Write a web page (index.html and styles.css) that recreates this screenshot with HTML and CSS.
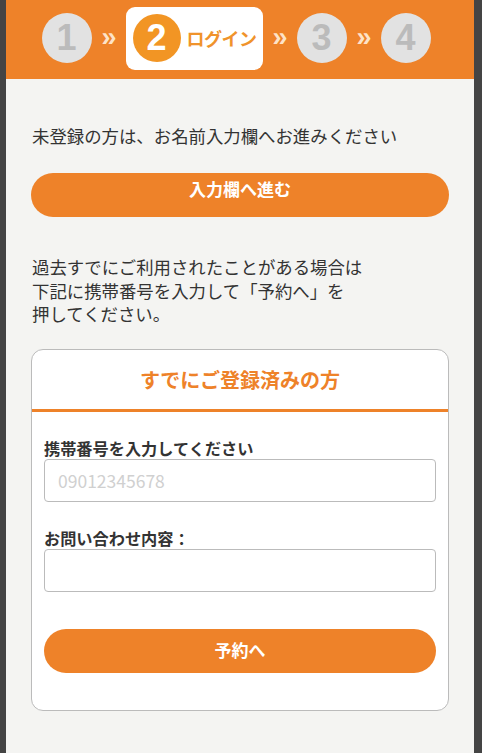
FILE: index.html
```html
<!DOCTYPE html>
<html lang="ja">
<head>
<meta charset="UTF-8">
<title>ログイン</title>
<link rel="stylesheet" href="styles.css">
</head>
<body>
<div class="page">
    <div class="steps">
        <span class="step">1</span>
        <span class="arrow">»</span>
        <div class="step-active">
            <span class="step step-now">2</span>
            <span class="step-label">ログイン</span>
        </div>
        <span class="arrow">»</span>
        <span class="step">3</span>
        <span class="arrow">»</span>
        <span class="step">4</span>
    </div>

    <div class="main">
        <p class="lead">未登録の方は、お名前入力欄へお進みください</p>
        <a class="btn" href="#">入力欄へ進む</a>

        <p class="note">過去すでにご利用されたことがある場合は<br>下記に携帯番号を入力して「予約へ」を<br>押してください。</p>

        <div class="card">
            <h2 class="card-title">すでにご登録済みの方</h2>
            <form class="card-body">
                <label class="field-label" for="tel">携帯番号を入力してください</label>
                <input class="field" type="tel" id="tel" placeholder="09012345678">

                <label class="field-label" for="memo">お問い合わせ内容：</label>
                <input class="field" type="text" id="memo">

                <button class="btn btn-submit" type="button">予約へ</button>
            </form>
        </div>
    </div>
</div>
</body>
</html>
```

FILE: styles.css
```css
body {
  margin: 0;
  background: #444444;
  font-family: "Noto Sans CJK JP", "Noto Sans", sans-serif;
  color: #333333;
}

.page {
  margin: 0 8px 0 6px;
  min-height: 753px;
  background: #f4f4f2;
}

/* step header */
.steps {
  display: flex;
  align-items: center;
  justify-content: center;
  gap: 10px;
  height: 79px;
  padding-right: 8px;
  padding-bottom: 3px;
  box-sizing: border-box;
  background: #ee8229;
}

.step {
  display: flex;
  align-items: center;
  justify-content: center;
  width: 50px;
  height: 50px;
  border-radius: 50%;
  background: #e2e2e2;
  color: #bbbbbb;
  font-family: "Liberation Sans", Arial, sans-serif;
  font-weight: bold;
  font-size: 36px;
}

.arrow {
  width: 14px;
  color: #fde3c8;
  font-family: "Liberation Sans", Arial, sans-serif;
  font-weight: bold;
  font-size: 27px;
  line-height: 1;
  margin-top: -2px;
}

.step-active {
  display: flex;
  align-items: center;
  gap: 6px;
  height: 63px;
  padding: 0 6px 0 7px;
  box-sizing: border-box;
  background: #ffffff;
  border-radius: 9px;
}

.step-now {
  width: 48px;
  height: 48px;
  background: #f29524;
  color: #ffffff;
}

.step-label {
  color: #f0932b;
  font-weight: bold;
  font-size: 18px;
  letter-spacing: -0.5px;
}

/* body */
.main {
  padding: 45px 25px 42px;
}

.lead {
  margin: 0 0 25px;
  padding-left: 1px;
  font-size: 17.4px;
  line-height: 24px;
}

.btn {
  display: block;
  width: 100%;
  height: 44px;
  padding: 0 0 12px;
  box-sizing: border-box;
  border: none;
  border-radius: 22px;
  background: #ee8229;
  color: #ffffff;
  font-family: inherit;
  font-weight: bold;
  font-size: 17px;
  line-height: 32px;
  text-align: center;
  text-decoration: none;
}

.note {
  margin: 38px 0 23px;
  padding-left: 1px;
  font-size: 17.4px;
  line-height: 23.5px;
}

.card {
  background: #ffffff;
  border: 1px solid #bbbbbb;
  border-radius: 12px;
}

.card-title {
  margin: 0;
  padding: 15px 0 14px;
  border-bottom: 3px solid #ee8229;
  color: #ee8229;
  font-size: 20px;
  line-height: 30px;
  text-align: center;
}

.card-body {
  display: flex;
  flex-direction: column;
  padding: 25px 12px 37px;
}

.field-label {
  font-weight: bold;
  font-size: 16.2px;
  line-height: 22px;
}

.field {
  height: 43px;
  margin-bottom: 25px;
  padding: 0 13px;
  box-sizing: border-box;
  border: 1px solid #bbbbbb;
  border-radius: 4px;
  font-family: inherit;
  font-size: 17.5px;
  color: #333333;
}

.field::placeholder {
  color: #d0d0d0;
}

.btn-submit {
  margin-top: 12px;
  padding: 0 0 2px;
  line-height: 42px;
}
```
